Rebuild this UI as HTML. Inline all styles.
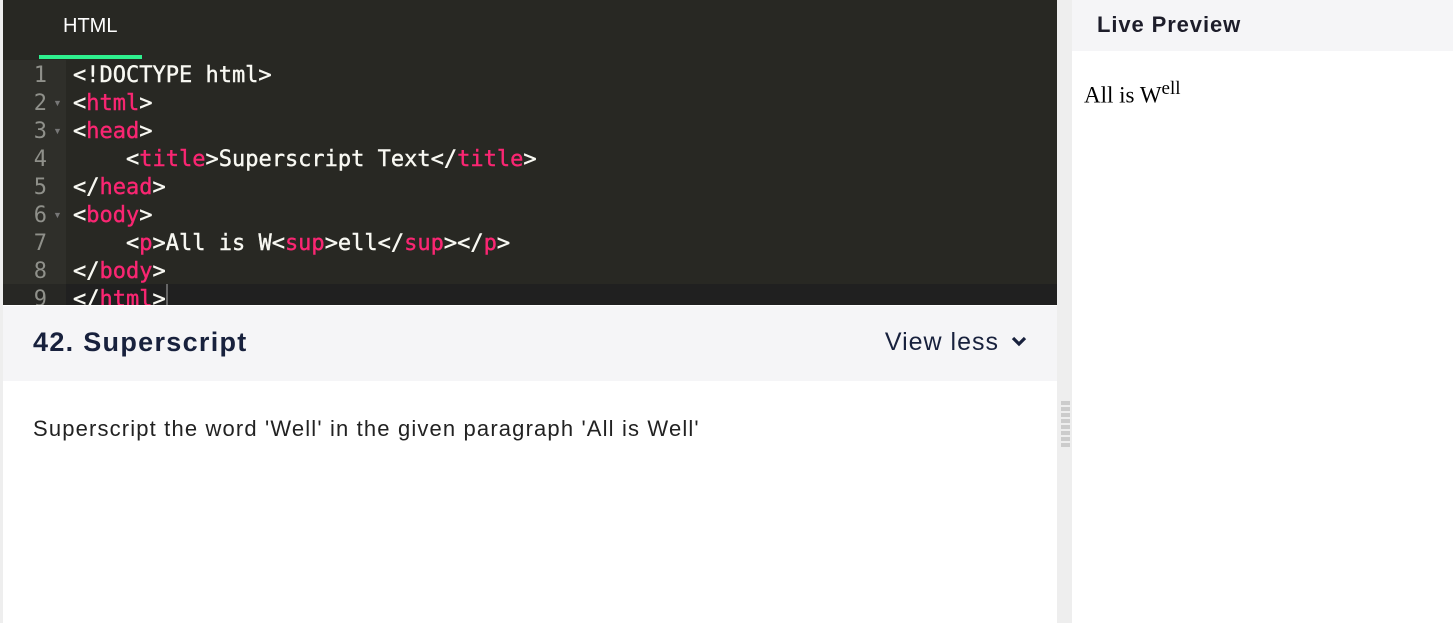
<!DOCTYPE html>
<html><head><style>
body{margin:0;width:1453px;height:623px;overflow:hidden;background:#fff;position:relative;font-family:"Liberation Sans",sans-serif}
.left{position:absolute;left:0;top:0;width:3px;height:623px;background:#eeeeee}
.ed{position:absolute;left:3px;top:0;width:1054px;height:305px;background:#282823;overflow:hidden}
.tab{position:absolute;left:60px;top:15px;color:#fff;font-size:20px}
.ul{position:absolute;left:36px;top:55px;width:103px;height:4px;background:#2ef08e}
.gut{position:absolute;left:0;top:60px;width:63px;height:245px;background:#2f2f2a}
.act{position:absolute;left:0;top:284px;width:1054px;height:21px;background:#202020}
.act .g{position:absolute;left:0;top:0;width:63px;height:21px;background:#272724}
.ln{position:absolute;left:0;width:44px;text-align:right;color:#8f908a;font:22px "DejaVu Sans Mono","Liberation Mono",monospace}
.ar{position:absolute;left:50px;color:#777;font-size:9px}
.cd{position:absolute;left:70px;color:#f8f8f2;font:22px "DejaVu Sans Mono","Liberation Mono",monospace;white-space:pre;letter-spacing:0px;-webkit-text-stroke:0.4px}
.t{color:#f92672}
.cur{position:absolute;left:163px;top:284px;width:2px;height:21px;background:#666}
.split{position:absolute;left:1057px;top:0;width:15px;height:623px;background:#eeeeee}
.dots{position:absolute;left:1061px;top:401px;width:9px;height:46px;background:repeating-linear-gradient(#ccc 0 4px,transparent 4px 6px);}
.rh{position:absolute;left:1072px;top:0;width:381px;height:51px;background:#f5f5f7}
.rh span{position:absolute;left:25px;top:12px;font-size:22px;font-weight:bold;color:#1d1d2a;letter-spacing:0.9px}
.pv{position:absolute;left:1084px;top:78px;font:23px "Liberation Serif",serif;color:#000}
.bh{position:absolute;left:3px;top:306px;width:1054px;height:75px;background:#f5f5f7}
.bh .ti{position:absolute;left:30px;top:21px;font-size:27px;font-weight:bold;color:#18213d;letter-spacing:1.3px}
.bh .vl{position:absolute;right:58px;top:22px;font-size:25px;color:#18213d;letter-spacing:1px}
.bh svg{position:absolute;right:30px;top:30px}
.desc{position:absolute;left:33px;top:416px;font-size:22px;color:#222;letter-spacing:1.15px}
</style></head><body>
<div class="left"></div>
<div class="ed">
<div class="tab">HTML</div>
<div class="ul"></div>
<div class="gut"></div>
<div class="act"><div class="g"></div></div>
<div class="cur"></div>
<div class="ln" style="top:63px">1</div>
<div class="ln" style="top:91px">2</div><div class="ar" style="top:98px">▼</div>
<div class="ln" style="top:119px">3</div><div class="ar" style="top:126px">▼</div>
<div class="ln" style="top:147px">4</div>
<div class="ln" style="top:175px">5</div>
<div class="ln" style="top:203px">6</div><div class="ar" style="top:210px">▼</div>
<div class="ln" style="top:231px">7</div>
<div class="ln" style="top:259px">8</div>
<div class="ln" style="top:287px">9</div>
<div class="cd" style="top:63px">&lt;!DOCTYPE html&gt;</div>
<div class="cd" style="top:91px">&lt;<span class="t">html</span>&gt;</div>
<div class="cd" style="top:119px">&lt;<span class="t">head</span>&gt;</div>
<div class="cd" style="top:147px">    &lt;<span class="t">title</span>&gt;Superscript Text&lt;/<span class="t">title</span>&gt;</div>
<div class="cd" style="top:175px">&lt;/<span class="t">head</span>&gt;</div>
<div class="cd" style="top:203px">&lt;<span class="t">body</span>&gt;</div>
<div class="cd" style="top:231px">    &lt;<span class="t">p</span>&gt;All is W&lt;<span class="t">sup</span>&gt;ell&lt;/<span class="t">sup</span>&gt;&lt;/<span class="t">p</span>&gt;</div>
<div class="cd" style="top:259px">&lt;/<span class="t">body</span>&gt;</div>
<div class="cd" style="top:287px">&lt;/<span class="t">html</span>&gt;</div>
</div>
<div class="split"></div><div class="dots"></div>
<div class="rh"><span>Live Preview</span></div>
<div class="pv">All is W<sup style="font-size:19px">ell</sup></div>
<div class="bh"><div class="ti">42. Superscript</div><div class="vl">View less</div>
<svg width="16" height="12" viewBox="0 0 16 12"><path d="M2 2l6 6 6-6" fill="none" stroke="#18213d" stroke-width="3.2"/></svg></div>
<div class="desc">Superscript the word 'Well' in the given paragraph 'All is Well'</div>
</body></html>
